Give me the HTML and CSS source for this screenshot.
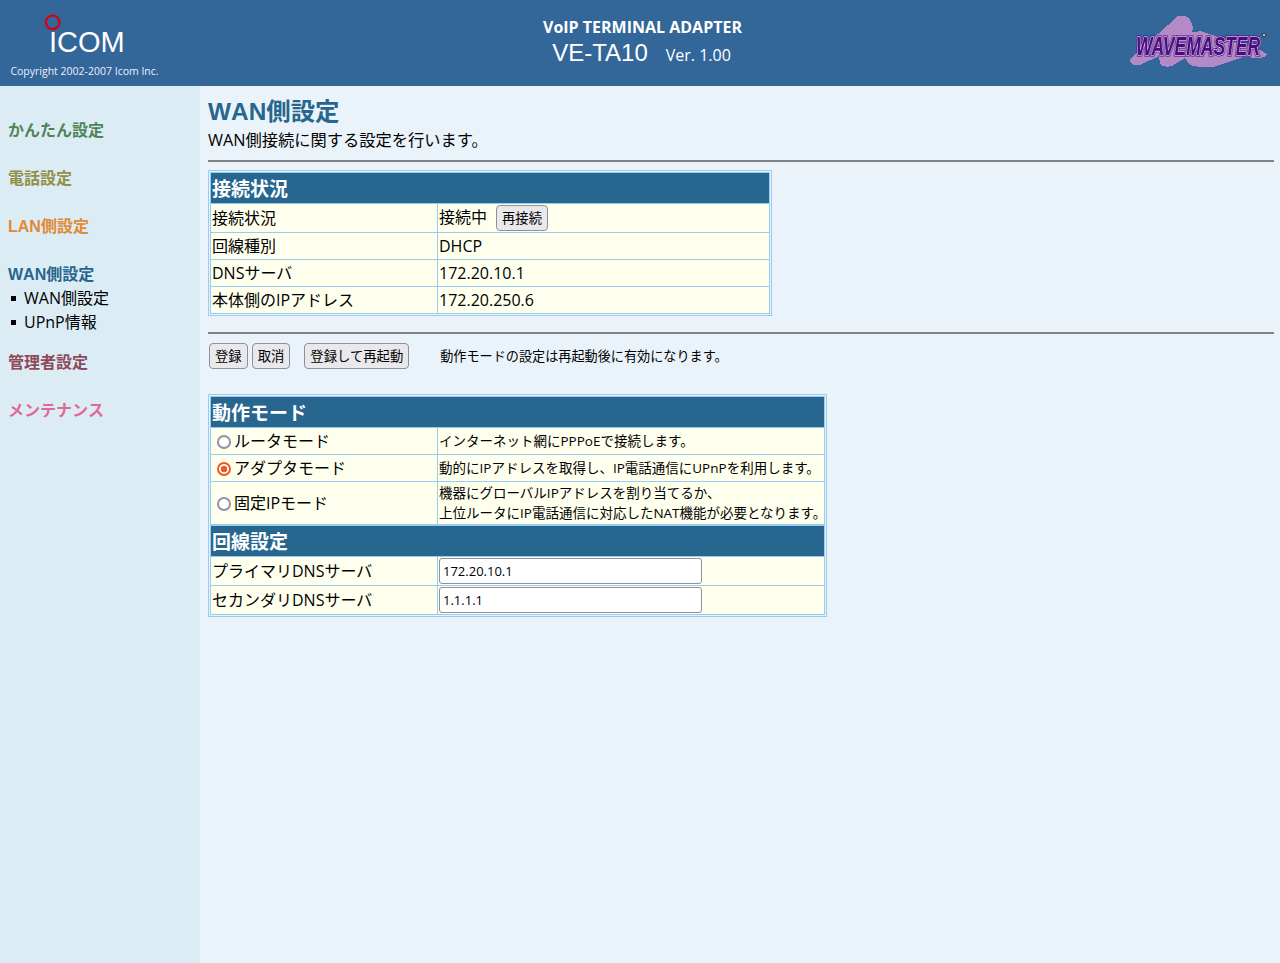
FILE: index.html
```html
<!DOCTYPE html>
<html lang="ja">
<head>
<meta charset="utf-8">
<title>VE-TA10</title>
<link rel="stylesheet" href="styles.css">
</head>
<body>
<header class="top">
  <div class="brand">
    <svg class="icom" width="90" height="48" viewBox="0 0 90 48">
      <circle cx="12.7" cy="9.3" r="6.8" fill="none" stroke="#d8000f" stroke-width="2.2"/>
      <text x="9" y="38.5" class="icom-text">ICOM</text>
    </svg>
    <div class="copy">Copyright 2002-2007 Icom Inc.</div>
  </div>
  <div class="title">
    <div class="t1">VoIP TERMINAL ADAPTER</div>
    <div class="t2"><span class="model">VE-TA10</span><span class="ver">Ver. 1.00</span></div>
  </div>
  <svg class="wave" width="140" height="56" viewBox="0 0 140 56">
    <path class="blob" d="M0 46 Q2 42 8 38 L48 2 Q56 0 60 6 Q64 12 62 18 L66 18 Q72 16 76 19 L92 24 L130 36 L137 40 Q136 44 128 44 L113 43 L83 53 Q70 54 60 51 L55 44 L42 52 Q34 54 30 50 L29 42 L10 51 Q0 52 0 46 Z"/>
    <text class="wave-back" transform="translate(6 41) scale(.7 1)" aria-hidden="true">WAVEMASTER</text>
    <text class="wave-text" transform="translate(6 41) scale(.7 1)">WAVEMASTER</text>
    <circle cx="134" cy="21" r="1.8" fill="#bbb" stroke="#222" stroke-width="0.8"/>
  </svg>
</header>
<div class="body">
  <nav class="side">
    <div class="group c1">かんたん設定</div>
    <div class="group c2">電話設定</div>
    <div class="group c3">LAN側設定</div>
    <div class="group c4 open">WAN側設定</div>
    <ul class="sub">
      <li>WAN側設定</li>
      <li>UPnP情報</li>
    </ul>
    <div class="group c5">管理者設定</div>
    <div class="group c6">メンテナンス</div>
  </nav>
  <main class="main">
    <h1>WAN側設定</h1>
    <p class="lead">WAN側接続に関する設定を行います。</p>
    <hr>
    <table class="tbl t-status">
      <colgroup><col class="c-key"><col></colgroup>
      <tr><th colspan="2">接続状況</th></tr>
      <tr class="r1"><td class="k">接続状況</td><td>接続中<button class="btn reconnect">再接続</button></td></tr>
      <tr><td class="k">回線種別</td><td>DHCP</td></tr>
      <tr><td class="k">DNSサーバ</td><td>172.20.10.1</td></tr>
      <tr class="last"><td class="k">本体側のIPアドレス</td><td>172.20.250.6</td></tr>
    </table>
    <hr class="second">
    <div class="actions">
      <button class="btn">登録</button>
      <button class="btn">取消</button>
      <button class="btn restart">登録して再起動</button>
      <span class="note">動作モードの設定は再起動後に有効になります。</span>
    </div>
    <table class="tbl t-mode">
      <colgroup><col class="c-key"><col></colgroup>
      <tr><th colspan="2">動作モード</th></tr>
      <tr>
        <td class="k"><label class="radio"><input type="radio" name="m">ルータモード</label></td>
        <td class="small">インターネット網にPPPoEで接続します。</td>
      </tr>
      <tr>
        <td class="k"><label class="radio"><input type="radio" name="m" checked>アダプタモード</label></td>
        <td class="small">動的にIPアドレスを取得し、IP電話通信にUPnPを利用します。</td>
      </tr>
      <tr class="r-two">
        <td class="k"><label class="radio"><input type="radio" name="m">固定IPモード</label></td>
        <td class="small">機器にグローバルIPアドレスを割り当てるか、<br>上位ルータにIP電話通信に対応したNAT機能が必要となります。</td>
      </tr>
      <tr class="sec"><th colspan="2">回線設定</th></tr>
      <tr class="r-in"><td class="k">プライマリDNSサーバ</td><td><input class="field" type="text" value="172.20.10.1"></td></tr>
      <tr class="r-in last"><td class="k">セカンダリDNSサーバ</td><td><input class="field" type="text" value="1.1.1.1"></td></tr>
    </table>
  </main>
</div>
</body>
</html>
```
FILE: styles.css
```css
* { box-sizing: border-box; }
html, body { margin: 0; height: 100%; }
body {
  font-family: "Open Sans", "Noto Sans CJK JP", sans-serif;
  font-size: 16px;
  color: #000;
  background: #ebf3fa;
  display: flex;
  flex-direction: column;
  height: 963px;
  overflow: hidden;
}
.top {
  height: 86px;
  flex: none;
  background: #336699;
  color: #fff;
  display: grid;
  grid-template-columns: 169px 1fr 140px;
  padding: 0 13px 0 0;
}
.brand { display: flex; flex-direction: column; align-items: center; }
.icom { margin-top: 13px; }
.icom-text { font-family: "Liberation Sans", sans-serif; font-size: 29px; fill: #fff; }
.copy { font-size: 10.5px; line-height: 14px; margin-top: 3px; color: #eef; white-space: nowrap; }
.title { text-align: center; padding: 16px 11px 0 0; }
.t1 { font-size: 16px; font-weight: 700; line-height: 22px; }
.t2 { line-height: 30px; padding-right: 2px; }
.model { font-family: "Liberation Sans", sans-serif; font-size: 24px; }
.ver { font-size: 16px; margin-left: 18px; }
.wave { margin-top: 14px; margin-left: 3px; overflow: visible; }
.blob { fill: #b48ac6; shape-rendering: crispEdges; }
.wave-back, .wave-text {
  font-family: "Liberation Sans", sans-serif;
  font-size: 25px;
  font-weight: 700;
  font-style: italic;
}
.wave-back { fill: #4b0a82; stroke: #4b0a82; stroke-width: 3; }
.wave-text {
  fill: #4b0a82;
  stroke: #fff;
  stroke-width: 1.2;
  paint-order: stroke;
}
.body { flex: 1; display: flex; min-height: 0; }
.side { width: 200px; flex: none; background: #dcecf5; padding-top: 32px; }
.group {
  font-family: "Liberation Sans", "Noto Sans CJK JP", sans-serif;
  font-kerning: none;
  font-weight: 700;
  font-size: 16px;
  line-height: 24px;
  padding: 1px 0 0 8px;
  margin-bottom: 23px;
}
.group.open { margin-bottom: 0; }
.c1 { color: #4d8555; }
.c2 { color: #8f9148; }
.c3 { color: #e08a35; }
.c4 { color: #26668f; }
.c5 { color: #8f4a5a; }
.c6 { color: #e06a96; }
.sub { list-style: none; margin: -1px 0 16px; padding: 0; }
.sub li { line-height: 24px; padding-left: 24px; position: relative; }
.sub li::before {
  content: "";
  position: absolute;
  left: 11px;
  top: 10px;
  width: 5px;
  height: 5px;
  background: #000;
}
.main { flex: 1; padding: 8px 6px 0 8px; }
h1 {
  margin: 0;
  padding-top: 1px;
  font-family: "Liberation Sans", "Noto Sans CJK JP", sans-serif;
  font-kerning: none;
  font-size: 24.4px;
  font-weight: 700;
  line-height: 33px;
  color: #26668f;
}
.lead { margin: 0; line-height: 24px; font-size: 16.25px; }
hr {
  border: 0;
  height: 2px;
  background: #808080;
  margin: 8px 0 8px;
}
hr.second { margin: 16px 0 0; }
.tbl {
  border-collapse: separate;
  border-spacing: 0;
  border: 1px solid #99ccee;
  padding: 1px;
  background: #ebf3fa;
  table-layout: fixed;
}
.t-status { width: 564px; }
.t-mode { width: 619px; }
.c-key { width: 227px; }
.tbl th {
  background: #26668f;
  color: #fff;
  font-size: 19px;
  font-weight: 700;
  text-align: left;
  line-height: 28px;
  height: 31px;
  padding: 2px 1px 0;
  border: 1px solid #99ccee;
  border-bottom: 0;
}
.tbl td {
  background: #ffffee;
  padding: 0 1px;
  height: 27px;
  line-height: 24px;
  border-top: 1px solid #99ccee;
  white-space: nowrap;
}
.tbl tr > td:first-child { border-left: 1px solid #99ccee; }
.tbl td + td { border-left: 1px solid #99ccee; border-right: 1px solid #99ccee; }
.tbl tr:last-child td { border-bottom: 1px solid #99ccee; }
.r1 td { height: 29px; }
.t-status .last td { height: 28px; }
.btn {
  font-family: "Open Sans", "Noto Sans CJK JP", sans-serif;
  font-size: 13.33px;
  height: 26px;
  padding: 0 5px 2px;
  border: 1px solid #8f8f9d;
  border-radius: 4px;
  background: #e9e9ed;
  color: #000;
  margin: 0;
  vertical-align: middle;
}
.reconnect { margin-left: 9px; }
.actions { display: flex; gap: 4px; padding: 9px 0 0 1px; height: 60px; align-items: flex-start; }
.restart { margin-left: 10px; }
.note { font-size: 13.13px; line-height: 27px; margin-left: 27px; }
.small { font-size: 13.5px; }
.tbl .r-two td { height: 43px; }
.r-two .small { line-height: 20px; padding-top: 1px; padding-bottom: 1px; }
.radio { display: flex; align-items: center; }
.radio input {
  appearance: none;
  margin: 1px 3px 0 5px;
  width: 14px;
  height: 14px;
  border: 2px solid #9492a4;
  border-radius: 50%;
  background: #fff;
}
.radio input:checked {
  border-color: #ee5a24;
  background: radial-gradient(circle, #ee5a24 0 3px, #fff 3.6px);
}
.tbl .r-in td { height: 29px; }
.tbl .r-in.last td { height: 30px; }
.tbl .sec th { border-top: 2px solid #99ccee; height: 32px; }
.field {
  font-family: "Open Sans", sans-serif;
  font-size: 13px;
  width: 263px;
  height: 26px;
  padding: 0 3px;
  border: 1px solid #8f8f9d;
  border-radius: 3px;
  background: #fff;
  vertical-align: middle;
}
```
